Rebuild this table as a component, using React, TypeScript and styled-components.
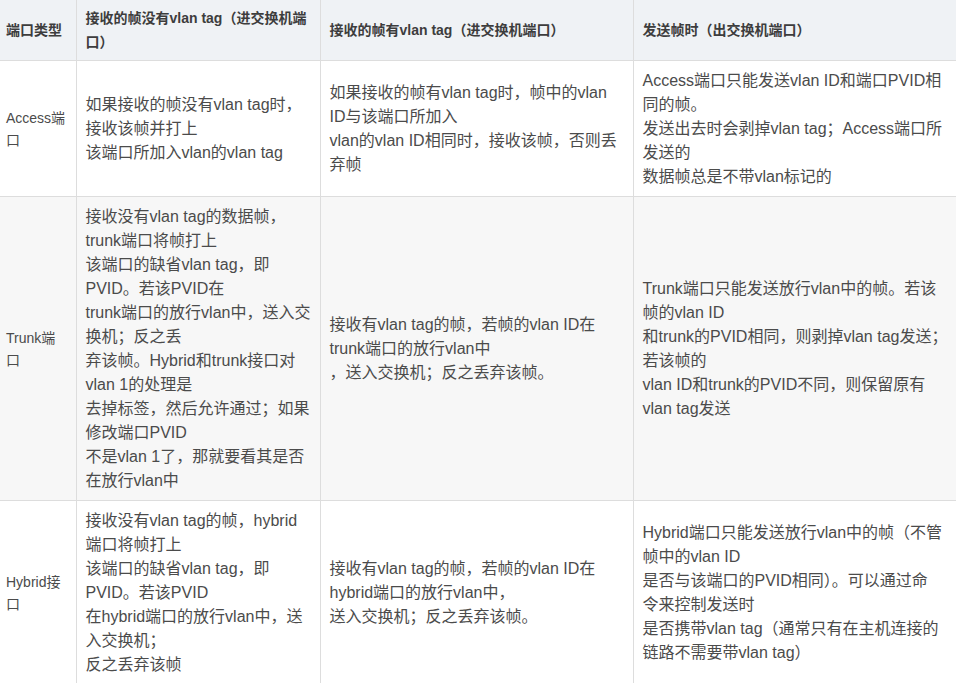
import React from 'react';
import styled, { createGlobalStyle } from 'styled-components';

const GlobalStyle = createGlobalStyle`
  html, body {
    margin: 0;
    padding: 0;
    background: #ffffff;
    overflow: hidden;
  }
  body {
    font-family: "Liberation Sans", "Noto Sans CJK SC", Arial, sans-serif;
  }
`;

const Frame = styled.div`
  width: 956px;
  height: 683px;
  overflow: hidden;
`;

const Table = styled.table`
  width: 975px;
  table-layout: fixed;
  border-collapse: collapse;
  border-spacing: 0;
`;

const HeadRow = styled.tr`
  background: #eff2f5;
`;

const BodyRow = styled.tr<{ $striped: boolean }>`
  background: ${(p) => (p.$striped ? '#f7f7f7' : '#ffffff')};
`;

const HeadCell = styled.th<{ $first?: boolean }>`
  height: 60px;
  box-sizing: border-box;
  padding: 6px 9px 6px ${(p) => (p.$first ? '6px' : '9px')};
  border: 1px solid #dddddd;
  border-top: none;
  border-left: ${(p) => (p.$first ? 'none' : '1px solid #dddddd')};
  text-align: left;
  vertical-align: middle;
  font-size: 14px;
  line-height: 24px;
  font-weight: 700;
  color: #3d3d3d;
  white-space: nowrap;
`;

const Cell = styled.td<{ $first?: boolean }>`
  padding: 8px 9px 7px ${(p) => (p.$first ? '6px' : '9px')};
  border: 1px solid #dddddd;
  border-left: ${(p) => (p.$first ? 'none' : '1px solid #dddddd')};
  vertical-align: middle;
  font-size: ${(p) => (p.$first ? '14px' : '16px')};
  line-height: ${(p) => (p.$first ? '22px' : '24px')};
  color: #4b4b4b;
  white-space: nowrap;
`;

const columns = [
  ['端口类型'],
  ['接收的帧没有vlan tag（进交换机端', '口）'],
  ['接收的帧有vlan tag（进交换机端口）'],
  ['发送帧时（出交换机端口）'],
];

const widths = [76, 244, 313, 342];

const rows: string[][][] = [
  [
    ['Access端', '口'],
    ['如果接收的帧没有vlan tag时，', '接收该帧并打上', '该端口所加入vlan的vlan tag'],
    ['如果接收的帧有vlan tag时，帧中的vlan', 'ID与该端口所加入', 'vlan的vlan ID相同时，接收该帧，否则丢', '弃帧'],
    ['Access端口只能发送vlan ID和端口PVID相', '同的帧。', '发送出去时会剥掉vlan tag；Access端口所', '发送的', '数据帧总是不带vlan标记的'],
  ],
  [
    ['Trunk端', '口'],
    [
      '接收没有vlan tag的数据帧，',
      'trunk端口将帧打上',
      '该端口的缺省vlan tag，即',
      'PVID。若该PVID在',
      'trunk端口的放行vlan中，送入交',
      '换机；反之丢',
      '弃该帧。Hybrid和trunk接口对',
      'vlan 1的处理是',
      '去掉标签，然后允许通过；如果',
      '修改端口PVID',
      '不是vlan 1了，那就要看其是否',
      '在放行vlan中',
    ],
    ['接收有vlan tag的帧，若帧的vlan ID在', 'trunk端口的放行vlan中', '，送入交换机；反之丢弃该帧。'],
    [
      'Trunk端口只能发送放行vlan中的帧。若该',
      '帧的vlan ID',
      '和trunk的PVID相同，则剥掉vlan tag发送；',
      '若该帧的',
      'vlan ID和trunk的PVID不同，则保留原有',
      'vlan tag发送',
    ],
  ],
  [
    ['Hybrid接', '口'],
    [
      '接收没有vlan tag的帧，hybrid',
      '端口将帧打上',
      '该端口的缺省vlan tag，即',
      'PVID。若该PVID',
      '在hybrid端口的放行vlan中，送',
      '入交换机；',
      '反之丢弃该帧',
    ],
    ['接收有vlan tag的帧，若帧的vlan ID在', 'hybrid端口的放行vlan中，', '送入交换机；反之丢弃该帧。'],
    [
      'Hybrid端口只能发送放行vlan中的帧（不管',
      '帧中的vlan ID',
      '是否与该端口的PVID相同）。可以通过命',
      '令来控制发送时',
      '是否携带vlan tag（通常只有在主机连接的',
      '链路不需要带vlan tag）',
    ],
  ],
];

const Lines: React.FC<{ lines: string[] }> = ({ lines }) => (
  <>
    {lines.map((line, i) => (
      <React.Fragment key={i}>
        {i > 0 && <br />}
        {line}
      </React.Fragment>
    ))}
  </>
);

const App: React.FC = () => {
  return (
    <Frame>
      <GlobalStyle />
      <Table>
        <colgroup>
          {widths.map((w, i) => (
            <col key={i} style={{ width: w }} />
          ))}
        </colgroup>
        <thead>
          <HeadRow>
            {columns.map((lines, i) => (
              <HeadCell key={i} $first={i === 0}>
                <Lines lines={lines} />
              </HeadCell>
            ))}
          </HeadRow>
        </thead>
        <tbody>
          {rows.map((row, r) => (
            <BodyRow key={r} $striped={r % 2 === 1}>
              {row.map((lines, c) => (
                <Cell key={c} $first={c === 0}>
                  <Lines lines={lines} />
                </Cell>
              ))}
            </BodyRow>
          ))}
        </tbody>
      </Table>
    </Frame>
  );
};

export default App;
